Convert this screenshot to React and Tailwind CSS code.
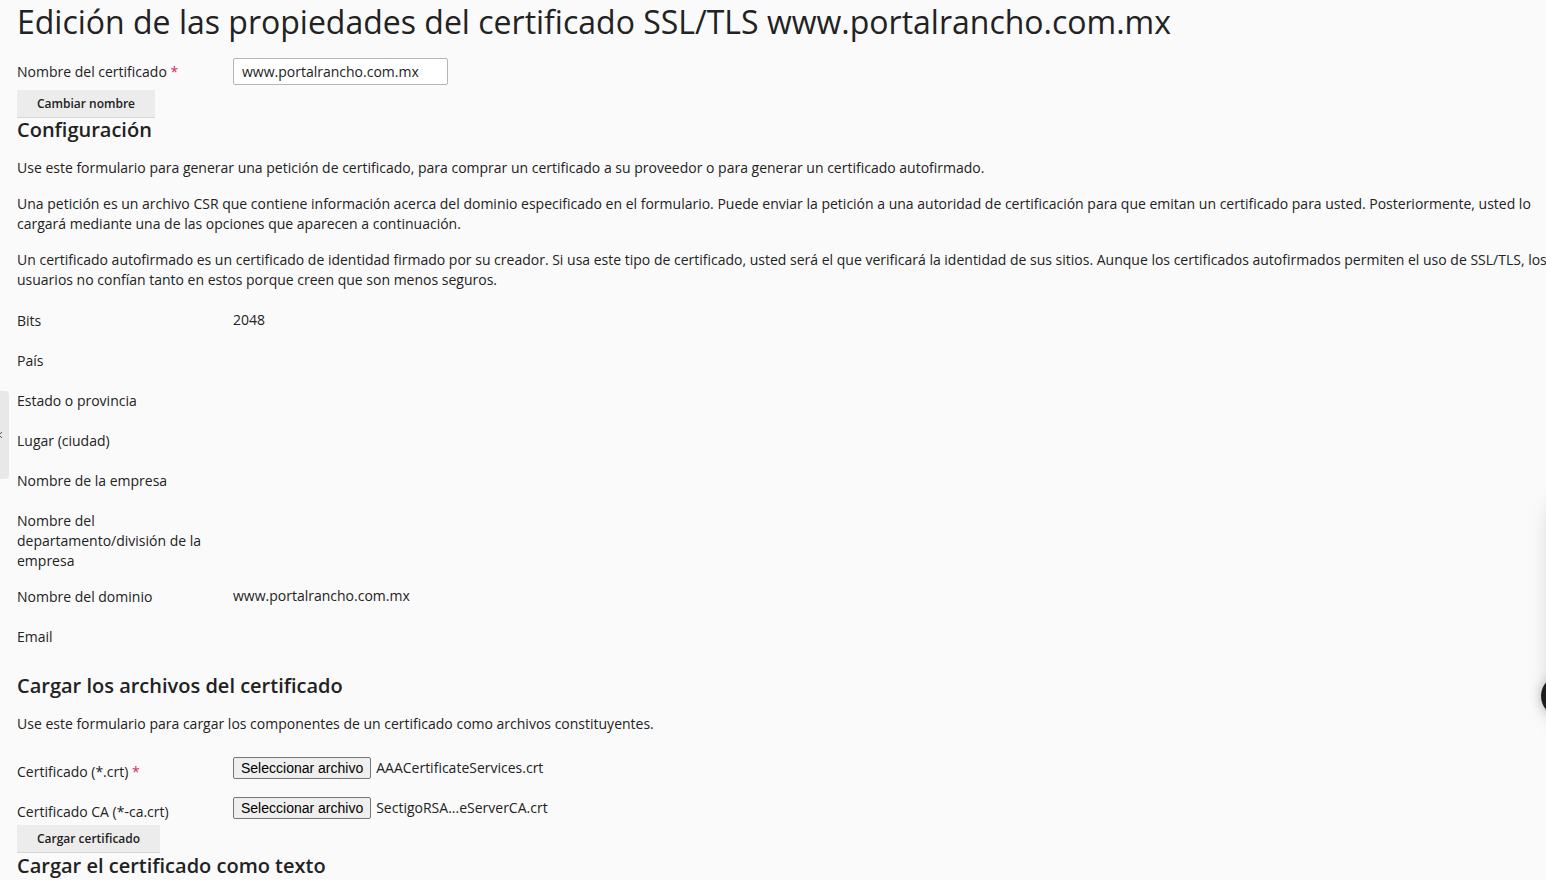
const font = { fontFamily: '"Open Sans", "Noto Sans", sans-serif' };

const FIELDS = [
  { label: "Bits", value: "2048" },
  { label: "País" },
  { label: "Estado o provincia" },
  { label: "Lugar (ciudad)" },
  { label: "Nombre de la empresa" },
  { label: "Nombre del departamento/división de la empresa", tight: true },
  { label: "Nombre del dominio", value: "www.portalrancho.com.mx" },
  { label: "Email" },
];

function Required() {
  return <span className="text-[#d12a5c]"> *</span>;
}

function FileRow({ label, required, fileName }) {
  return (
    <div className="flex h-10 items-start">
      <div className="w-[216px] shrink-0 pt-[10px]">
        {label}
        {required && <Required />}
      </div>
      <div className="flex items-center gap-[5px] pt-[5px]">
        <button
          type="button"
          className="h-[22px] rounded-[2px] border border-[#767676] bg-[#efefef] px-[7px] text-[14px] leading-none text-black"
          style={{ fontFamily: '"Liberation Sans", Arial, sans-serif' }}
        >
          Seleccionar archivo
        </button>
        <span>{fileName}</span>
      </div>
    </div>
  );
}

export default function App() {
  return (
    <div
      className="relative h-[880px] overflow-hidden bg-[#fafafa] pl-[17px] text-[14px] leading-[20px] text-[#222]"
      style={font}
    >
      <h1 className="pt-[2px] text-[32px] leading-[40px] font-normal text-[#222]">
        Edición de las propiedades del certificado SSL/TLS www.portalrancho.com.mx
      </h1>

      <div className="mt-[16px] flex items-center">
        <div className="w-[216px] shrink-0">
          Nombre del certificado
          <Required />
        </div>
        <input
          readOnly
          value="www.portalrancho.com.mx"
          className="h-[27px] w-[215px] rounded-[2px] border border-[#b5b5b5] bg-white px-2 text-[14px] text-[#222] outline-none"
          style={font}
        />
      </div>

      <button
        type="button"
        className="mt-[5px] block h-[28px] w-[138px] border-b border-[#d6d6d6] bg-[#ececec] text-[12px] font-semibold text-[#222]"
        style={font}
      >
        Cambiar nombre
      </button>

      <h2 className="-mt-[1px] text-[20px] leading-[26px] font-semibold text-[#222]">Configuración</h2>

      <div className="w-[1545px]">
        <p className="mt-[15px]">
          Use este formulario para generar una petición de certificado, para comprar un certificado a su proveedor o para generar un certificado autofirmado.
        </p>
        <p className="mt-[16px]">
          Una petición es un archivo CSR que contiene información acerca del dominio especificado en el formulario. Puede enviar la petición a una autoridad de certificación para que emitan un certificado para usted. Posteriormente, usted lo cargará mediante una de las opciones que aparecen a continuación.
        </p>
        <p className="mt-[16px]">
          Un certificado autofirmado es un certificado de identidad firmado por su creador. Si usa este tipo de certificado, usted será el que verificará la identidad de sus sitios. Aunque los certificados autofirmados permiten el uso de SSL/TLS, los usuarios no confían tanto en estos porque creen que son menos seguros.
        </p>
      </div>

      <div className="mt-[11px]">
        {FIELDS.map((f) => (
          <div
            key={f.label}
            className={`flex items-start ${f.tight ? "pt-[10px] pb-[6px]" : "py-[10px]"}`}
          >
            <div className="w-[216px] shrink-0 pr-[16px]">{f.label}</div>
            <div className="-mt-[1px]">{f.value}</div>
          </div>
        ))}
      </div>

      <h2 className="mt-[16px] text-[20px] leading-[26px] font-semibold text-[#222]">
        Cargar los archivos del certificado
      </h2>
      <p className="mt-[15px]">
        Use este formulario para cargar los componentes de un certificado como archivos constituyentes.
      </p>

      <div className="mt-[18px]">
        <FileRow label="Certificado (*.crt)" required fileName="AAACertificateServices.crt" />
        <FileRow label="Certificado CA (*-ca.crt)" fileName="SectigoRSA...eServerCA.crt" />
      </div>

      <button
        type="button"
        className="-mt-[7px] block h-[28px] w-[143px] border-b border-[#d6d6d6] bg-[#ececec] text-[12px] font-semibold text-[#222]"
        style={font}
      >
        Cargar certificado
      </button>
      <h2 className="text-[20px] leading-[26px] font-semibold text-[#222]">
        Cargar el certificado como texto
      </h2>

      {/* collapsed side tab on the left */}
      <div className="absolute top-[391px] left-0 flex h-[88px] w-[9px] items-center rounded-r-[4px] bg-[#e8e8e8]">
        <svg width="5" height="8" viewBox="0 0 5 8" className="-ml-[2px]">
          <path d="M4 1 1 4l3 3" fill="none" stroke="#555" strokeWidth="1" />
        </svg>
      </div>

      {/* floating panel + button peeking from the right edge */}
      <div className="absolute top-[505px] left-[1553px] h-[215px] w-[60px] rounded-l-[8px] bg-white shadow-[0_0_24px_rgba(0,0,0,0.2)]" />
      <div className="absolute top-[675px] left-[1541px] h-[42px] w-[42px] rounded-full bg-[#1d1d1d] shadow-[0_0_12px_rgba(0,0,0,0.25)]" />
    </div>
  );
}
